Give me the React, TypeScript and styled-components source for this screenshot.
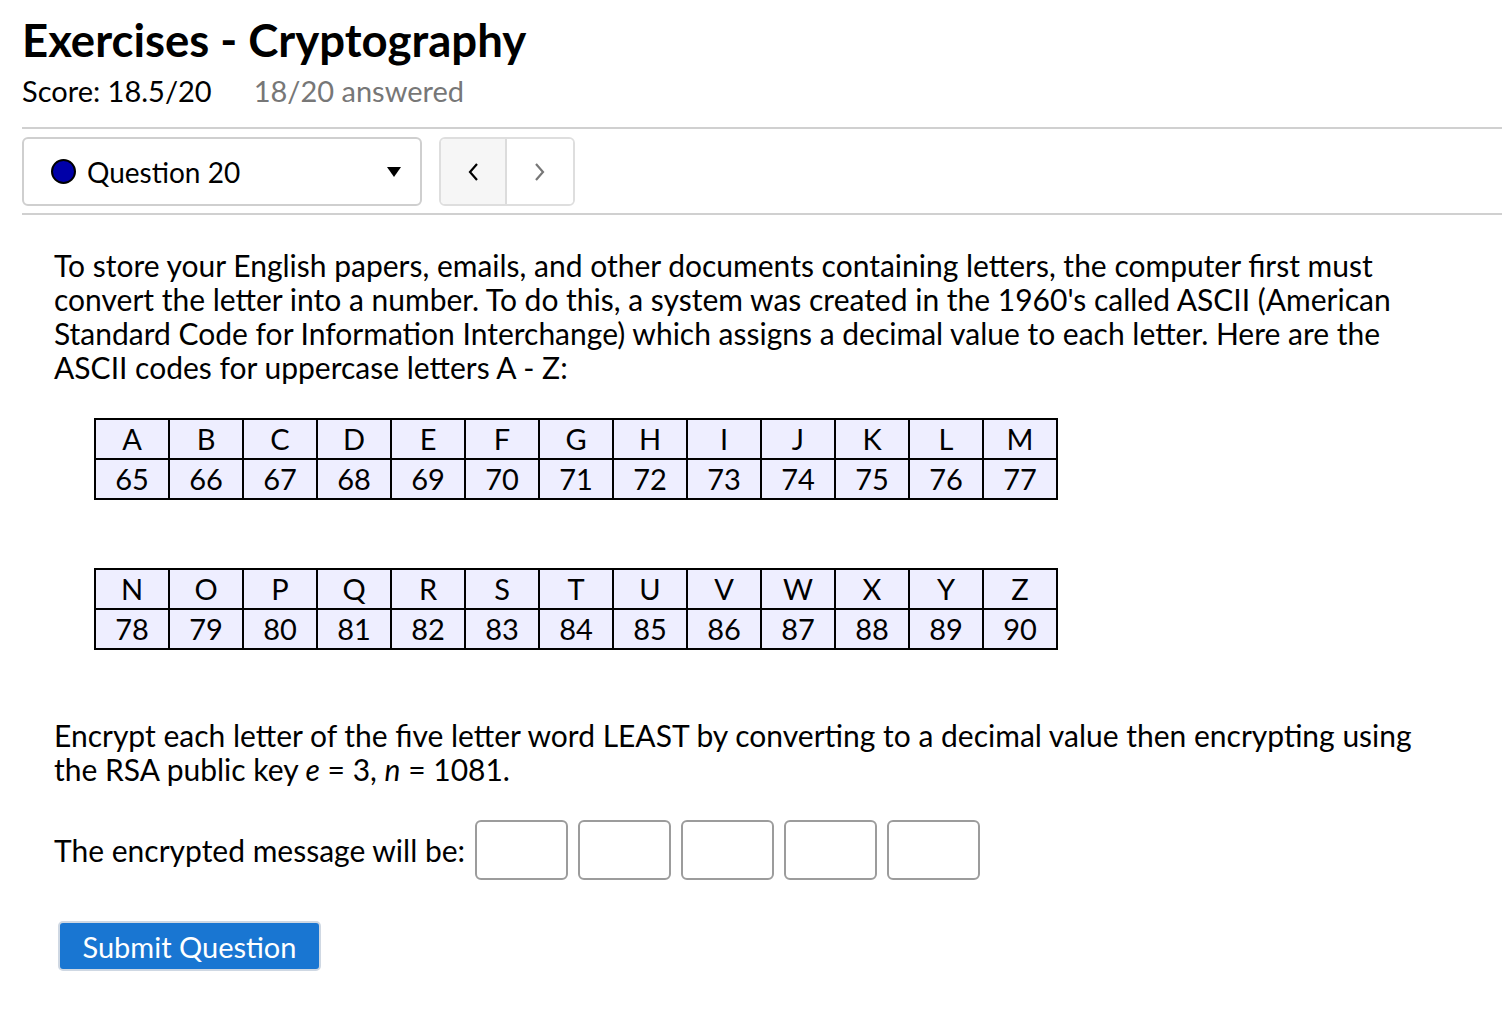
import React from "react";
import styled, { createGlobalStyle } from "styled-components";

const Global = createGlobalStyle`
  html, body {
    margin: 0;
    padding: 0;
    background: #fff;
  }
  body {
    font-family: Lato, "Noto Sans", sans-serif;
    color: #000;
  }
`;

const Page = styled.div`
  padding: 13px 0 0 22px;
`;

const Title = styled.h1`
  margin: 0;
  font-size: 45.5px;
  line-height: 54px;
  font-weight: 700;
`;

const ScoreRow = styled.div`
  display: flex;
  gap: 42px;
  font-size: 29px;
  line-height: 40px;
  margin-top: 4px;
  padding-bottom: 16px;
`;

const Muted = styled.span`
  color: #777;
`;

const Rule = styled.hr`
  border: 0;
  border-top: 2px solid #d0d0d0;
  margin: 0;
`;

const NavBar = styled.div`
  display: flex;
  gap: 17px;
  padding: 8px 0 7px;
`;

const Select = styled.div`
  box-sizing: border-box;
  width: 400px;
  height: 69px;
  border: 2px solid #cfcfcf;
  border-radius: 6px;
  display: flex;
  align-items: center;
  padding: 0 18px 0 27px;
  font-size: 28px;
`;

const Dot = styled.span`
  box-sizing: border-box;
  width: 25px;
  height: 25px;
  border-radius: 50%;
  background: #0000a8;
  border: 2px solid #000;
  margin-right: 11px;
`;

const SelectLabel = styled.span`
  flex: 1;
`;

const Pager = styled.div`
  display: flex;
  border: 2px solid #dedede;
  border-radius: 6px;
  overflow: hidden;
  height: 69px;
  box-sizing: border-box;
`;

const PageBtn = styled.button<{ $active?: boolean }>`
  width: 66px;
  border: 0;
  background: ${(p) => (p.$active ? "#f6f6f6" : "#fff")};
  border-right: ${(p) => (p.$active ? "2px solid #dcdcdc" : "0")};
  display: flex;
  align-items: center;
  justify-content: center;
  padding: 0;
`;

const Body = styled.div`
  padding: 33px 0 0 32px;
  font-size: 30px;
  line-height: 34px;
`;

const Para = styled.p`
  margin: 0;
  white-space: nowrap;
`;

const Table = styled.table`
  border-collapse: collapse;
  table-layout: fixed;
  width: 964px;
  margin: 34px 0 0 40px;
  background: #eeeeff;
  font-size: 29px;
`;

const Cell = styled.td`
  border: 2px solid #000;
  height: 38px;
  padding: 0 4px;
  text-align: center;
  line-height: 36px;
`;

const AnswerRow = styled.div`
  display: flex;
  align-items: center;
  margin-top: 34px;
  gap: 10px;
`;

const Box = styled.input`
  box-sizing: border-box;
  width: 93px;
  height: 60px;
  border: 2px solid #9c9c9c;
  border-radius: 6px;
  margin: 0;
`;

const Submit = styled.button`
  margin: 41px 0 0 4px;
  height: 50px;
  width: 263px;
  padding: 0;
  background: #1976d2;
  color: #fff;
  border: 2px solid #cfd8e3;
  border-radius: 5px;
  font-family: inherit;
  font-size: 29px;
`;

const rows1 = "ABCDEFGHIJKLM".split("");
const rows2 = "NOPQRSTUVWXYZ".split("");

const CodeTable = ({ letters }: { letters: string[] }) => (
  <Table>
    <tbody>
      <tr>
        {letters.map((l) => (
          <Cell key={l}>{l}</Cell>
        ))}
      </tr>
      <tr>
        {letters.map((l) => (
          <Cell key={l}>{l.charCodeAt(0)}</Cell>
        ))}
      </tr>
    </tbody>
  </Table>
);

export default function App() {
  return (
    <>
      <Global />
      <Page>
        <Title>Exercises - Cryptography</Title>
        <ScoreRow>
          <span>Score: 18.5/20</span>
          <Muted>18/20 answered</Muted>
        </ScoreRow>
        <Rule />
        <NavBar>
          <Select>
            <Dot />
            <SelectLabel>Question 20</SelectLabel>
            <svg width="16" height="12" viewBox="0 0 16 12">
              <path d="M1 1h14L8 11z" fill="#000" />
            </svg>
          </Select>
          <Pager>
            <PageBtn $active>
              <svg width="14" height="24" viewBox="0 0 14 24">
                <path d="M11 4L4 12l7 8" stroke="#000" strokeWidth="2.2" fill="none" />
              </svg>
            </PageBtn>
            <PageBtn>
              <svg width="14" height="24" viewBox="0 0 14 24">
                <path d="M3 4l7 8-7 8" stroke="#777" strokeWidth="2.2" fill="none" />
              </svg>
            </PageBtn>
          </Pager>
        </NavBar>
        <Rule />
        <Body>
          <Para>
            To store your English papers, emails, and other documents containing letters, the
            computer first must
            <br />
            convert the letter into a number. To do this, a system was created in the 1960's called
            ASCII (American
            <br />
            Standard Code for Information Interchange) which assigns a decimal value to each letter.
            Here are the
            <br />
            ASCII codes for uppercase letters A - Z:
          </Para>
          <CodeTable letters={rows1} />
          <div style={{ height: 34 }} />
          <CodeTable letters={rows2} />
          <div style={{ height: 68 }} />
          <Para>
            Encrypt each letter of the five letter word LEAST by converting to a decimal value then
            encrypting using
            <br />
            the RSA public key <i>e</i> = 3, <i>n</i> = 1081.
          </Para>
          <AnswerRow>
            <span>The encrypted message will be:</span>
            <Box />
            <Box />
            <Box />
            <Box />
            <Box />
          </AnswerRow>
          <Submit>Submit Question</Submit>
        </Body>
      </Page>
    </>
  );
}
